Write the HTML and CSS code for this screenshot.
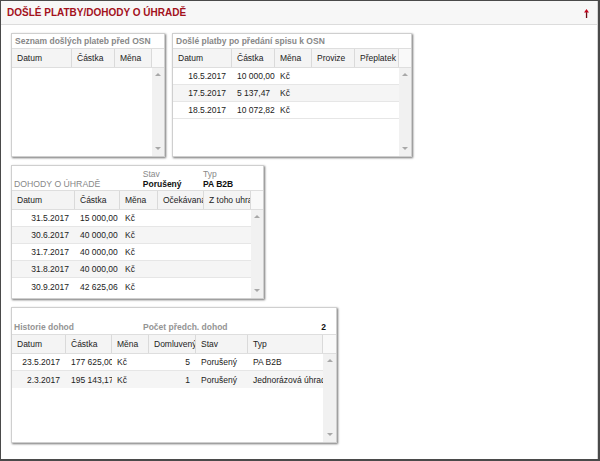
FILE: index.html
```html
<!DOCTYPE html>
<html lang="cs">
<head>
<meta charset="utf-8">
<title>Došlé platby/dohody o úhradě</title>
<link rel="stylesheet" href="styles.css">
</head>
<body>
<div class="frame">
  <div class="sheet">
    <header class="bar">
      <h1 class="bar-title">DOŠLÉ PLATBY/DOHODY O ÚHRADĚ</h1>
      <svg class="bar-icon" width="5" height="9" viewBox="0 0 5 9" aria-hidden="true">
        <path d="M2.5 0 L5 3.6 H0 Z" fill="#c4001a"/>
        <rect x="1.9" y="3.2" width="1.3" height="5.8" fill="#6e0a14"/>
      </svg>
    </header>
    <main class="content">
      <div class="row">
        <section class="card card-in">
          <div class="card-title">Seznam došlých plateb před OSN</div>
          <div class="thead">
            <div class="th">Datum</div><div class="th">Částka</div><div class="th">Měna</div><div class="th th-scroll"></div>
          </div>
          <div class="tbody">
            <div class="rows"></div>
            <div class="scroll"><span class="arr up"></span><span class="arr down"></span></div>
          </div>
        </section>

        <section class="card card-out">
          <div class="card-title">Došlé platby po předání spisu k OSN</div>
          <div class="thead">
            <div class="th">Datum</div><div class="th">Částka</div><div class="th">Měna</div><div class="th">Provize</div><div class="th">Přeplatek</div><div class="th th-scroll"></div>
          </div>
          <div class="tbody">
            <div class="rows">
              <div class="tr"><div class="td r">16.5.2017</div><div class="td">10 000,00</div><div class="td">Kč</div><div class="td"></div><div class="td"></div></div>
              <div class="tr alt"><div class="td r">17.5.2017</div><div class="td">5 137,47</div><div class="td">Kč</div><div class="td"></div><div class="td"></div></div>
              <div class="tr"><div class="td r">18.5.2017</div><div class="td">10 072,82</div><div class="td">Kč</div><div class="td"></div><div class="td"></div></div>
            </div>
            <div class="scroll"><span class="arr up"></span><span class="arr down"></span></div>
          </div>
        </section>
      </div>

      <section class="card card-dohody">
        <div class="card-head">
          <div class="head-title">DOHODY O ÚHRADĚ</div>
          <div class="head-field"><div class="lbl">Stav</div><div class="val">Porušený</div></div>
          <div class="head-field"><div class="lbl">Typ</div><div class="val">PA B2B</div></div>
        </div>
        <div class="thead">
          <div class="th">Datum</div><div class="th">Částka</div><div class="th">Měna</div><div class="th">Očekávaná</div><div class="th">Z toho uhrazeno</div><div class="th th-scroll"></div>
        </div>
        <div class="tbody">
          <div class="rows">
            <div class="tr"><div class="td r">31.5.2017</div><div class="td">15 000,00</div><div class="td">Kč</div><div class="td"></div><div class="td"></div></div>
            <div class="tr alt"><div class="td r">30.6.2017</div><div class="td">40 000,00</div><div class="td">Kč</div><div class="td"></div><div class="td"></div></div>
            <div class="tr"><div class="td r">31.7.2017</div><div class="td">40 000,00</div><div class="td">Kč</div><div class="td"></div><div class="td"></div></div>
            <div class="tr alt"><div class="td r">31.8.2017</div><div class="td">40 000,00</div><div class="td">Kč</div><div class="td"></div><div class="td"></div></div>
            <div class="tr last"><div class="td r">30.9.2017</div><div class="td">42 625,06</div><div class="td">Kč</div><div class="td"></div><div class="td"></div></div>
          </div>
          <div class="scroll"><span class="arr up"></span><span class="arr down"></span></div>
        </div>
      </section>

      <section class="card card-hist">
        <div class="card-head hist-head">
          <div class="hist-title">Historie dohod</div>
          <div class="hist-count-label">Počet předch. dohod</div>
          <div class="hist-count">2</div>
        </div>
        <div class="thead">
          <div class="th">Datum</div><div class="th">Částka</div><div class="th">Měna</div><div class="th">Domluvený</div><div class="th">Stav</div><div class="th">Typ</div><div class="th th-scroll"></div>
        </div>
        <div class="tbody">
          <div class="rows">
            <div class="tr"><div class="td r">23.5.2017</div><div class="td">177 625,00</div><div class="td">Kč</div><div class="td r">5</div><div class="td">Porušený</div><div class="td">PA B2B</div></div>
            <div class="tr alt last"><div class="td r">2.3.2017</div><div class="td">195 143,17</div><div class="td">Kč</div><div class="td r">1</div><div class="td">Porušený</div><div class="td">Jednorázová úhrada</div></div>
          </div>
          <div class="scroll"><span class="arr up"></span><span class="arr down"></span></div>
        </div>
      </section>
    </main>
  </div>
</div>
</body>
</html>
```

FILE: styles.css
```css
* { box-sizing: border-box; }

html, body {
  margin: 0;
  padding: 0;
  background: #fff;
}

body {
  font-family: "Liberation Sans", Arial, sans-serif;
  font-size: 8.5px;
  color: #222;
}

.frame {
  width: 600px;
  height: 461px;
  border: 1px solid #4a4a4a;
  border-right-width: 2px;
  border-bottom-width: 2px;
  background: #fff;
}

.sheet {
  height: 100%;
  border-right: 1px solid #d6d6d6;
}

.bar {
  height: 24px;
  background: #f7f7f7;
  border-bottom: 1px solid #dcdcdc;
  display: flex;
  align-items: center;
  justify-content: space-between;
  padding: 0 8px 0 6px;
}

.bar-title {
  margin: 0;
  font-size: 10px;
  font-weight: bold;
  color: #a3111c;
  line-height: 12px;
}

.bar-icon {
  display: block;
  margin-top: 1px;
}

.content {
  display: flex;
  flex-direction: column;
  align-items: flex-start;
  gap: 8px;
  padding: 8px 0 0 10px;
}

.row {
  display: flex;
  gap: 7px;
}

.card {
  background: #fff;
  border: 1px solid #cfcfcf;
  box-shadow: 1px 1px 2px rgba(0, 0, 0, 0.55);
  display: flex;
  flex-direction: column;
}

.card-in { width: 154px; height: 124px; }
.card-out { width: 240px; height: 124px; }
.card-dohody { width: 253px; height: 134px; }
.card-hist { width: 326px; height: 136px; }

.card-title {
  height: 14px;
  line-height: 14px;
  padding-left: 3px;
  color: #888;
  font-weight: bold;
  white-space: nowrap;
  overflow: hidden;
}

.thead {
  display: grid;
  height: 20px;
  background: #f4f4f4;
  border-top: 1px solid #dedede;
  border-bottom: 1px solid #dedede;
}

.th {
  line-height: 18px;
  padding-left: 5px;
  border-right: 1px solid #dadada;
  white-space: nowrap;
  overflow: hidden;
  color: #222;
}

.th-scroll {
  border-right: none;
  background: #f9f9f9;
}

.tbody {
  flex: 1;
  display: flex;
  min-height: 0;
}

.rows {
  flex: 1;
  min-width: 0;
}

.tr {
  display: grid;
  height: 17px;
  align-items: center;
  border-bottom: 1px solid #e6e6e6;
}

.tr.alt { background: #f5f5f5; }
.tr.last { border-bottom: none; }

.td {
  padding: 0 5px;
  white-space: nowrap;
  overflow: hidden;
  line-height: 16px;
}

.td.r {
  text-align: right;
  padding-right: 6px;
}

.scroll {
  width: 12px;
  background: #f1f1f1;
  display: flex;
  flex-direction: column;
  align-items: center;
  justify-content: space-between;
  padding: 5px 0 6px;
}

.arr {
  width: 0;
  height: 0;
  border-left: 3px solid transparent;
  border-right: 3px solid transparent;
}

.arr.up { border-bottom: 3px solid #a8a8a8; }
.arr.down { border-top: 3px solid #a8a8a8; }

/* column layouts */
.card-in .thead { grid-template-columns: 60px 43px 37px 12px; }
.card-in .tr { grid-template-columns: 60px 43px 37px; }

.card-out .thead { grid-template-columns: 59px 43px 37px 43px 44px 12px; }
.card-out .tr { grid-template-columns: 59px 43px 37px 43px 44px; }

.card-dohody .thead { grid-template-columns: 63px 45px 38px 46px 47px 12px; }
.card-dohody .tr { grid-template-columns: 63px 45px 38px 46px 47px; }

.card-hist .thead { grid-template-columns: 54px 46px 37px 47px 52px 75px 13px; }
.card-hist .tr { grid-template-columns: 54px 46px 37px 47px 52px 75px; }
.card-hist .scroll { width: 13px; }

/* card headers */
.card-head {
  height: 24px;
  display: flex;
  align-items: flex-end;
  padding: 0 0 1px 2px;
}

.head-title {
  width: 135px;
  line-height: 10px;
  color: #888;
  font-size: 8.7px;
}

.head-field {
  width: 63px;
  line-height: 10px;
}

.lbl { color: #888; }

.val {
  font-weight: bold;
  color: #111;
}

.hist-head {
  height: 26px;
  padding-bottom: 2px;
}

.hist-title {
  width: 129px;
  line-height: 10px;
  color: #949494;
  font-weight: bold;
}

.hist-count-label {
  flex: 1;
  line-height: 10px;
  color: #949494;
  font-weight: bold;
}

.hist-count {
  line-height: 10px;
  padding-right: 10px;
  font-weight: bold;
  color: #111;
}
```
